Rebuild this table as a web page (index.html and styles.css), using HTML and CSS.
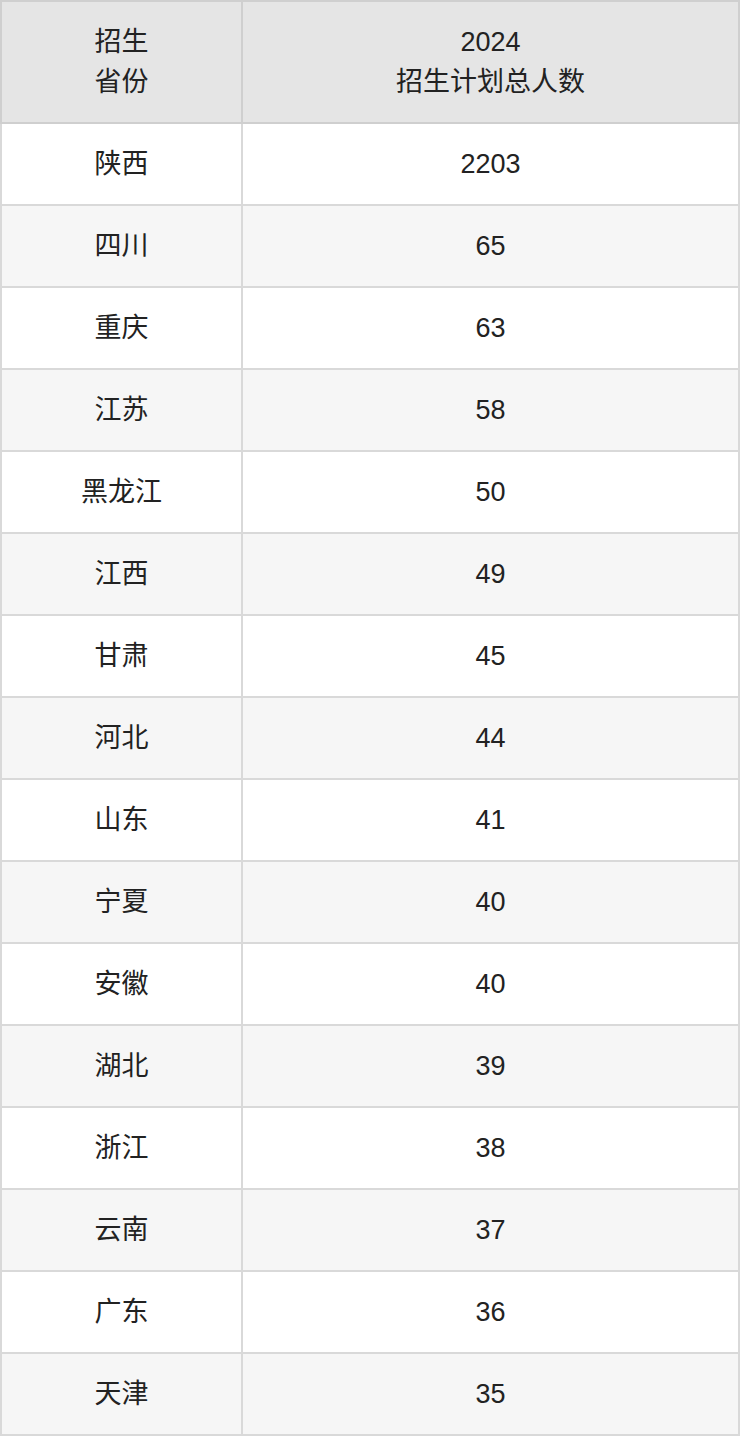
FILE: index.html
```html
<!DOCTYPE html>
<html lang="zh">
<head>
<meta charset="utf-8">
<link rel="stylesheet" href="styles.css">
</head>
<body>
<table class="plan">
  <thead>
    <tr><th class="c1">招生<br>省份</th><th class="c2">2024<br>招生计划总人数</th></tr>
  </thead>
  <tbody>
    <tr><td>陕西</td><td>2203</td></tr>
    <tr><td>四川</td><td>65</td></tr>
    <tr><td>重庆</td><td>63</td></tr>
    <tr><td>江苏</td><td>58</td></tr>
    <tr><td>黑龙江</td><td>50</td></tr>
    <tr><td>江西</td><td>49</td></tr>
    <tr><td>甘肃</td><td>45</td></tr>
    <tr><td>河北</td><td>44</td></tr>
    <tr><td>山东</td><td>41</td></tr>
    <tr><td>宁夏</td><td>40</td></tr>
    <tr><td>安徽</td><td>40</td></tr>
    <tr><td>湖北</td><td>39</td></tr>
    <tr><td>浙江</td><td>38</td></tr>
    <tr><td>云南</td><td>37</td></tr>
    <tr><td>广东</td><td>36</td></tr>
    <tr><td>天津</td><td>35</td></tr>
  </tbody>
</table>
</body>
</html>
```
FILE: styles.css
```css
html, body {
  margin: 0;
  padding: 0;
  background: #ffffff;
}
.plan {
  width: 740px;
  border-collapse: collapse;
  table-layout: fixed;
  font-family: "Liberation Sans", "Noto Sans CJK SC", sans-serif;
  font-size: 27px;
  color: #222222;
}
.plan th, .plan td {
  border: 2px solid #d9d9d9;
  text-align: center;
  vertical-align: middle;
  padding: 0;
  font-weight: normal;
}
.plan th {
  height: 120px;
  line-height: 40px;
  background: #e5e5e5;
  border-color: #cfcfcf;
}
.plan .c1 { width: 239px; }
.plan td {
  height: 80px;
  line-height: 40px;
}
.plan tbody tr:nth-child(even) td {
  background: #f6f6f6;
}
```
